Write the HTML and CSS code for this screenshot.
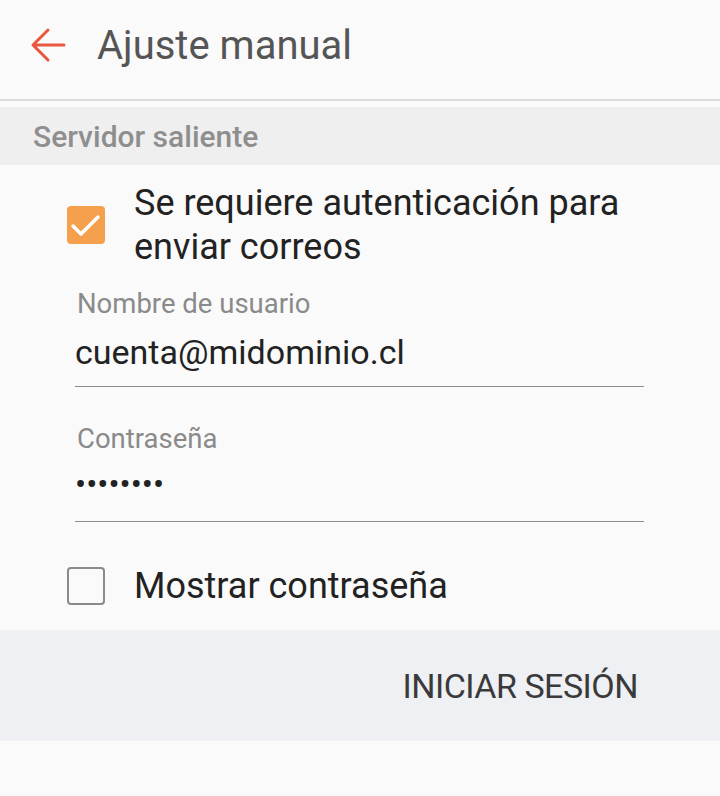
FILE: index.html
```html
<!DOCTYPE html>
<html lang="es">
<head>
    <meta charset="UTF-8">
    <meta name="viewport" content="width=device-width, initial-scale=1.0">
    <title>Ajuste manual</title>
    <link rel="stylesheet" href="styles.css">
</head>
<body>
    <header class="appbar">
        <svg class="back" width="40" height="40" viewBox="0 0 40 40">
            <path d="M5 18 H36 M20 3 L5 18 L20 33" fill="none" stroke="#e9573f" stroke-width="3" stroke-linecap="round" stroke-linejoin="round"/>
        </svg>
        <h1 class="title">Ajuste manual</h1>
    </header>

    <div class="section-header">Servidor saliente</div>

    <div class="check-row auth">
        <span class="box checked">
            <svg width="38" height="38" viewBox="0 0 38 38">
                <polyline points="6,20 14,28 31,11" fill="none" stroke="#fff" stroke-width="3.5" stroke-linecap="round" stroke-linejoin="round"/>
            </svg>
        </span>
        <span class="check-label">Se requiere autenticación para enviar correos</span>
    </div>

    <div class="field user">
        <div class="field-label">Nombre de usuario</div>
        <div class="field-value">cuenta@midominio.cl</div>
    </div>

    <div class="field pass">
        <div class="field-label">Contraseña</div>
        <div class="field-value dots">••••••••</div>
    </div>

    <div class="check-row show">
        <span class="box"></span>
        <span class="check-label">Mostrar contraseña</span>
    </div>

    <div class="action-bar">
        <span class="action">INICIAR SESIÓN</span>
    </div>
</body>
</html>
```

FILE: styles.css
```css
body {
    margin: 0;
    background-color: #fafafa;
    font-family: Roboto, "Noto Sans", sans-serif;
    width: 720px;
    height: 796px;
    overflow: hidden;
}

.appbar {
    height: 99px;
    display: flex;
    align-items: center;
    padding-left: 28px;
    border-bottom: 2px solid #dcdcdc;
}

.back {
    display: block;
    margin-top: -6px;
}

.title {
    margin: -8px 0 0 29px;
    font-size: 40px;
    font-weight: 400;
    color: #555;
}

.section-header {
    margin-top: 6px;
    height: 58px;
    line-height: 60px;
    padding-left: 33px;
    background-color: #efefef;
    font-size: 30px;
    font-weight: 500;
    color: #8e8e8e;
}

.check-row {
    display: flex;
    align-items: center;
    padding-left: 67px;
}

.check-row.auth {
    margin-top: 16px;
}

.check-row.show {
    margin-top: 42px;
    height: 44px;
}

.box {
    flex: none;
    width: 34px;
    height: 34px;
    border: 2px solid #8a8a8a;
    border-radius: 4px;
    margin-right: 29px;
}

.box.checked {
    width: 38px;
    height: 38px;
    border: none;
    background-color: #f5a04c;
}

.box svg {
    display: block;
}

.check-label {
    font-size: 36px;
    line-height: 44px;
    color: #222;
    width: 520px;
}

.field {
    margin: 0 76px 0 75px;
    border-bottom: 1.5px solid #8c8c8c;
}

.field.user {
    margin-top: 20px;
    padding-bottom: 12px;
}

.field.pass {
    margin-top: 37px;
    padding-bottom: 14px;
}

.field-label {
    font-size: 27.5px;
    line-height: 30px;
    color: #8a8a8a;
    padding-left: 2px;
}

.field-value {
    font-size: 34px;
    line-height: 44px;
    color: #222;
}

.user .field-value {
    margin-top: 11px;
}

.dots {
    margin-top: 9px;
    font-size: 33px;
}

.action-bar {
    margin-top: 22px;
    height: 111px;
    background-color: #eef0f3;
    display: flex;
    align-items: center;
    justify-content: flex-end;
    padding-right: 82px;
}

.action {
    font-size: 34px;
    color: #3a3a3a;
    letter-spacing: -0.5px;
}
```
